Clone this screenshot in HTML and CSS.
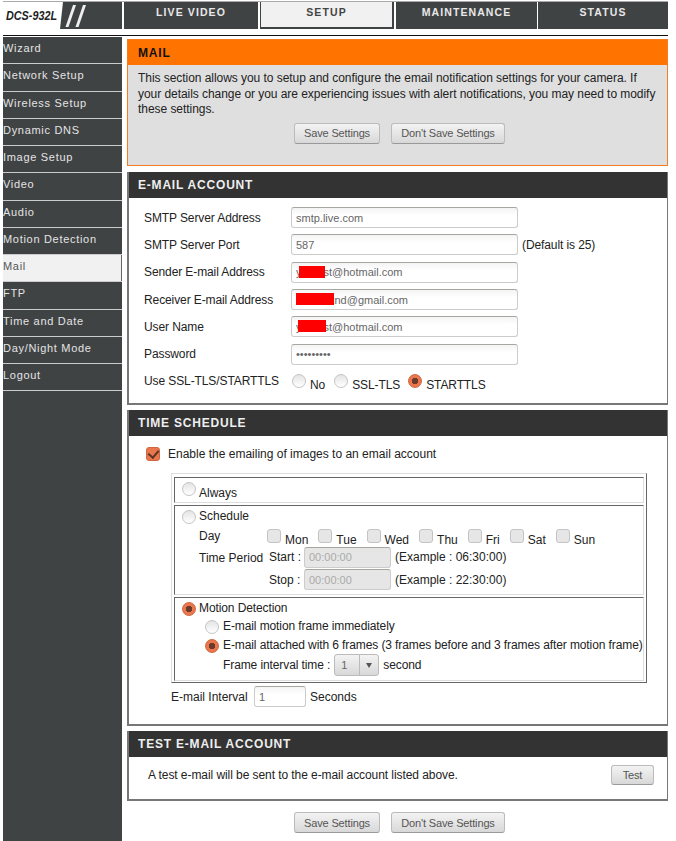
FILE: index.html
```html
<!DOCTYPE html>
<html lang="en">
<head>
    <meta charset="UTF-8">
    <title>DCS-932L Mail Setup</title>
    <link rel="stylesheet" href="styles.css">
</head>
<body>
    <div class="topbar">
        <div class="logo">
            <svg width="119" height="27" viewBox="0 0 119 27">
                <rect width="119" height="27" fill="#404344"/>
                <polygon points="0,0 60,0 57,27 0,27" fill="#fff"/>
                <polygon points="70,3 73,3 65.5,25 62.5,25" fill="#eee"/>
                <polygon points="80,3 83,3 75.5,25 72.5,25" fill="#eee"/>
                <text x="3" y="18" font-family="Liberation Sans" font-size="13" font-weight="700" font-style="italic" textLength="51" lengthAdjust="spacingAndGlyphs" fill="#222">DCS-932L</text>
            </svg>
        </div>
        <div class="tab tab-live">LIVE VIDEO</div>
        <div class="tab tab-setup active">SETUP</div>
        <div class="tab tab-maint">MAINTENANCE</div>
        <div class="tab tab-status">STATUS</div>
    </div>
    <div class="rule"></div>

    <div class="layout">
        <nav class="sidebar">
            <a>Wizard</a>
            <a>Network Setup</a>
            <a>Wireless Setup</a>
            <a>Dynamic DNS</a>
            <a>Image Setup</a>
            <a>Video</a>
            <a>Audio</a>
            <a>Motion Detection</a>
            <a class="selected">Mail</a>
            <a>FTP</a>
            <a>Time and Date</a>
            <a>Day/Night Mode</a>
            <a>Logout</a>
        </nav>

        <main class="content">
            <section class="box box-mail">
                <h2>MAIL</h2>
                <div class="mail-body">
                    <p>This section allows you to setup and configure the email notification settings for your camera. If<br>your details change or you are experiencing issues with alert notifications, you may need to modify<br>these settings.</p>
                    <div class="buttons">
                        <button class="btn btn-save">Save Settings</button>
                        <button class="btn btn-cancel">Don't Save Settings</button>
                    </div>
                </div>
            </section>

            <section class="box">
                <h2>E-MAIL ACCOUNT</h2>
                <div class="account-body">
                    <div class="row"><label>SMTP Server Address</label><input class="text" value="smtp.live.com"></div>
                    <div class="row"><label>SMTP Server Port</label><input class="text" value="587"><span class="hint">(Default is 25)</span></div>
                    <div class="row"><label>Sender E-mail Address</label><span class="masked"><input class="text" value="yxxxxst@hotmail.com"><i class="redact redact-sender"></i></span></div>
                    <div class="row"><label>Receiver E-mail Address</label><span class="masked"><input class="text" value="xxxxxxxnd@gmail.com"><i class="redact redact-receiver"></i></span></div>
                    <div class="row"><label>User Name</label><span class="masked"><input class="text" value="yxxxxst@hotmail.com"><i class="redact redact-user"></i></span></div>
                    <div class="row"><label>Password</label><input class="text" type="password" value="xxxxxxxxx"></div>
                    <div class="row row-ssl">
                        <label>Use SSL-TLS/STARTTLS</label>
                        <span class="choice"><input type="radio" name="ssl"><span>No</span></span>
                        <span class="choice"><input type="radio" name="ssl"><span>SSL-TLS</span></span>
                        <span class="choice"><input type="radio" name="ssl" checked><span>STARTTLS</span></span>
                    </div>
                </div>
            </section>

            <section class="box">
                <h2>TIME SCHEDULE</h2>
                <div class="schedule-body">
                    <div class="enable"><input type="checkbox" checked><span>Enable the emailing of images to an email account</span></div>
                    <div class="frame">
                        <div class="cell cell-always">
                            <input type="radio" name="when"><span>Always</span>
                        </div>
                        <div class="cell cell-schedule">
                            <div class="sched-title"><input type="radio" name="when"><span>Schedule</span></div>
                            <div class="days">
                                <span class="days-label">Day</span>
                                <span class="day"><input type="checkbox"><span>Mon</span></span>
                                <span class="day"><input type="checkbox"><span>Tue</span></span>
                                <span class="day"><input type="checkbox"><span>Wed</span></span>
                                <span class="day"><input type="checkbox"><span>Thu</span></span>
                                <span class="day"><input type="checkbox"><span>Fri</span></span>
                                <span class="day"><input type="checkbox"><span>Sat</span></span>
                                <span class="day"><input type="checkbox"><span>Sun</span></span>
                            </div>
                            <div class="period">
                                <span class="period-label">Time Period</span>
                                <div class="times">
                                    <div class="time"><span class="time-label">Start :</span><input class="text time-input" value="00:00:00" disabled><span>(Example : 06:30:00)</span></div>
                                    <div class="time"><span class="time-label">Stop :</span><input class="text time-input" value="00:00:00" disabled><span>(Example : 22:30:00)</span></div>
                                </div>
                            </div>
                        </div>
                        <div class="cell cell-motion">
                            <div class="motion-title"><input type="radio" name="when" checked><span>Motion Detection</span></div>
                            <div class="motion-opt"><input type="radio" name="frames"><span>E-mail motion frame immediately</span></div>
                            <div class="motion-opt"><input type="radio" name="frames" checked><span>E-mail attached with 6 frames (3 frames before and 3 frames after motion frame)</span></div>
                            <div class="interval-time">
                                <span>Frame interval time :</span>
                                <span class="select"><span class="select-value">1</span><span class="select-arrow"></span></span>
                                <span>second</span>
                            </div>
                        </div>
                    </div>
                    <div class="email-interval"><span>E-mail Interval</span><input class="text interval-input" value="1"><span>Seconds</span></div>
                </div>
            </section>

            <section class="box">
                <h2>TEST E-MAIL ACCOUNT</h2>
                <div class="test-body">
                    <span>A test e-mail will be sent to the e-mail account listed above.</span>
                    <button class="btn btn-test">Test</button>
                </div>
            </section>

            <div class="buttons buttons-bottom">
                <button class="btn btn-save">Save Settings</button>
                <button class="btn btn-cancel">Don't Save Settings</button>
            </div>
        </main>
    </div>
</body>
</html>
```

FILE: styles.css
```css
html, body {
    height: 841px;
    overflow: hidden;
}
body {
    margin: 0;
    padding: 1px 8px 0 3px;
    box-sizing: border-box;
    background-color: #fff;
    font-family: "Liberation Sans", Arial, sans-serif;
    font-size: 12px;
    color: #222;
}

/* top tabs */
.topbar {
    display: flex;
    height: 27px;
    border-top: 1px solid #aaa;
}
.logo {
    width: 119px;
    margin-right: 2px;
}
.logo svg {
    display: block;
}
.tab {
    background-color: #404344;
    color: #e8e8e8;
    font-size: 10.5px;
    font-weight: 700;
    letter-spacing: 1.1px;
    text-align: center;
    line-height: 20px;
    margin-right: 1px;
}
.tab-live { width: 134px; }
.tab-setup { width: 134px; margin: 0 1px; }
.tab-maint { width: 141px; margin: 0 1px 0 1px; }
.tab-status { flex: 1; margin-right: 0; }
.tab.active {
    background-color: #f1f1f1;
    color: #444;
    border: 2px solid #404344;
    border-width: 0 2px 2px 1px;
    box-sizing: border-box;
}
.rule {
    height: 1px;
    margin-top: 6px;
    background-color: #111;
}

.layout {
    display: flex;
    gap: 5px;
    height: 807px;
}

/* left menu */
.sidebar {
    width: 119px;
    flex: none;
    background-color: #404344;
    padding-top: 0;
    margin-top: 1px;
}
.sidebar a {
    display: block;
    height: 26.25px;
    margin-bottom: 1px;
    box-shadow: 0 1px 0 #ccc;
    color: #e4e4e4;
    font-size: 11px;
    letter-spacing: 0.7px;
    line-height: 22px;
    overflow: hidden;
}
.sidebar a.selected {
    background-color: #f1f1f1;
    color: #555;
    box-shadow: inset -1px 0 0 #666, 0 1px 0 #ccc;
}

/* right column */
.content {
    flex: 1;
    padding-top: 3px;
}
.box {
    border: 1px solid #777;
    border-width: 0 1px 2px 2px;
    margin-bottom: 5px;
}
.box h2 {
    margin: 0;
    height: 26px;
    padding-left: 9px;
    background-color: #333;
    color: #eee;
    font-size: 12px;
    font-weight: 700;
    letter-spacing: 0.8px;
    line-height: 26px;
}
.box-mail {
    border: 1px solid #f57c20;
    margin-bottom: 6px;
}
.box-mail h2 {
    height: 25px;
    padding-left: 10px;
    background-color: #ff7300;
    color: #111;
    line-height: 27px;
}
.mail-body {
    height: 100px;
    box-sizing: border-box;
    padding: 6px 10px 0;
    background-color: #dfdfdf;
}
.mail-body p {
    margin: 0;
    line-height: 15.5px;
    color: #222;
    letter-spacing: -0.05px;
}

.buttons {
    display: flex;
    justify-content: center;
    gap: 11px;
    margin-top: 5px;
    padding-left: 4px;
}
.buttons-bottom {
    margin-top: 11px;
}
.btn {
    height: 21px;
    padding: 0;
    border: 1px solid #bbb;
    border-bottom-color: #999;
    border-radius: 3px;
    background: linear-gradient(#f3f3f3, #d8d8d8);
    color: #555;
    font-family: "Liberation Sans", Arial, sans-serif;
    font-size: 11px;
    letter-spacing: -0.15px;
}
.btn-save { width: 86px; }
.btn-cancel { width: 114px; }
.btn-test { width: 43px; height: 20px; }

/* shared fields */
.text {
    box-sizing: border-box;
    height: 21px;
    width: 227px;
    padding: 0 4px;
    border: 1px solid #ccc;
    border-top-color: #a9a5a0;
    border-radius: 3px;
    background: linear-gradient(#f4f4f4, #fff 40%);
    color: #666;
    font-family: "Liberation Sans", Arial, sans-serif;
    font-size: 11px;
    outline: none;
}
input[type="radio"], input[type="checkbox"] {
    appearance: none;
    flex: none;
    box-sizing: border-box;
    width: 14px;
    height: 14px;
    margin: 0;
    border: 1px solid #c4c4c4;
    background: linear-gradient(#e4e4e4, #fff);
}
input[type="radio"] {
    border-radius: 50%;
}
input[type="radio"]:checked {
    border-color: #d0683f;
    background: radial-gradient(circle, #6b3a2a 0 3px, #e9764c 3.5px);
}
input[type="checkbox"] {
    border-radius: 3px;
    background: #e6e6e6;
}
.enable input[type="checkbox"]:checked {
    position: relative;
    border-color: #d0683f;
    background: #e9764c;
}
.enable input[type="checkbox"]:checked::after {
    content: "";
    position: absolute;
    left: 3px;
    top: 0;
    width: 5px;
    height: 8px;
    border: solid #5a3325;
    border-width: 0 2px 2px 0;
    transform: rotate(40deg);
}

/* account form */
.account-body {
    height: 205px;
    box-sizing: border-box;
    padding: 6px 0 0 15px;
}
.row {
    display: flex;
    align-items: center;
    height: 27.3px;
    letter-spacing: -0.1px;
}
.row label {
    width: 147px;
    flex: none;
}
.hint {
    margin-left: 4px;
}
.masked {
    position: relative;
    display: block;
    height: 21px;
}
.redact {
    position: absolute;
    top: 4px;
    height: 12px;
    background-color: #f00;
}
.redact-sender { left: 8px; width: 26px; }
.redact-receiver { left: 5px; width: 38px; }
.redact-user { left: 7px; width: 28px; }
.choice {
    display: flex;
    gap: 4px;
    margin-right: 9px;
}
.row-ssl label {
    margin-right: 1px;
}
.choice span {
    position: relative;
    top: 4px;
}
.row-ssl .choice:nth-of-type(2) { margin-right: 8px; }

/* schedule */
.schedule-body {
    height: 288px;
    box-sizing: border-box;
    padding: 10px 0 0 17px;
}
.enable {
    display: flex;
    gap: 8px;
    align-items: center;
    height: 15px;
}
.frame {
    width: 476px;
    box-sizing: border-box;
    margin: 12px 0 0 25px;
    padding: 3px 2px 1px 2px;
    border: 1px solid;
    border-color: #ddd #666 #666 #ddd;
    display: flex;
    flex-direction: column;
    gap: 2px;
}
.cell {
    box-sizing: border-box;
    border: 1px solid;
    border-color: #666 #ddd #ddd #666;
    padding-left: 7px;
}
.cell-always {
    display: flex;
    gap: 3px;
    height: 26px;
    padding-top: 4px;
}
.cell-always span {
    position: relative;
    top: 4px;
}
.cell-schedule {
    height: 90px;
}
.sched-title {
    display: flex;
    gap: 3px;
    padding-top: 4px;
}
.sched-title span {
    position: relative;
    top: -1px;
}
.days {
    display: flex;
    gap: 10px;
    margin-top: 5px;
    padding-left: 17px;
}
.days-label {
    width: 58px;
}
.day {
    display: flex;
    gap: 4px;
}
.day input {
    margin-top: 0;
}
.day span {
    position: relative;
    top: 4px;
}
.period {
    display: flex;
    padding-left: 17px;
    margin-top: 3px;
}
.period-label {
    width: 70px;
    padding-top: 5px;
}
.time {
    display: flex;
    align-items: center;
    height: 22.5px;
    gap: 4px;
}
.time-label {
    width: 31px;
    white-space: nowrap;
}
.time-input {
    width: 87px;
    height: 21px;
    background: #e6e6e6;
    color: #aaa;
}
.cell-motion {
    height: 84px;
    letter-spacing: -0.1px;
}
.motion-title {
    display: flex;
    gap: 3px;
    padding-top: 4px;
}
.motion-title span {
    position: relative;
    top: -1px;
}
.motion-opt {
    display: flex;
    gap: 4px;
    padding-left: 23px;
    margin-top: 4px;
    white-space: nowrap;
}
.motion-opt + .motion-opt {
    margin-top: 5px;
}
.motion-opt span {
    position: relative;
    top: -1px;
}
.interval-time {
    display: flex;
    align-items: center;
    gap: 4px;
    padding-left: 41px;
    margin-top: 1px;
}
.select {
    display: flex;
    width: 45px;
    height: 22px;
    box-sizing: border-box;
    border: 1px solid #bbb;
    border-radius: 3px;
    background: linear-gradient(#f3f3f3, #d8d8d8);
    color: #666;
    font-size: 11px;
    line-height: 20px;
}
.select-value {
    width: 25px;
    padding-left: 6px;
    box-sizing: border-box;
    border-right: 1px solid #bbb;
}
.select-arrow {
    width: 0;
    height: 0;
    margin: 8px 0 0 6px;
    border: 3.5px solid transparent;
    border-top: 5px solid #555;
}
.email-interval {
    display: flex;
    align-items: center;
    gap: 4px;
    margin: 3px 0 0 25px;
}
.email-interval span:first-child {
    width: 79px;
}
.interval-input {
    width: 52px;
}

/* test */
.test-body {
    display: flex;
    justify-content: space-between;
    align-items: center;
    height: 42px;
    box-sizing: border-box;
    padding: 0 13px 6px 19px;
    letter-spacing: -0.07px;
}
```
